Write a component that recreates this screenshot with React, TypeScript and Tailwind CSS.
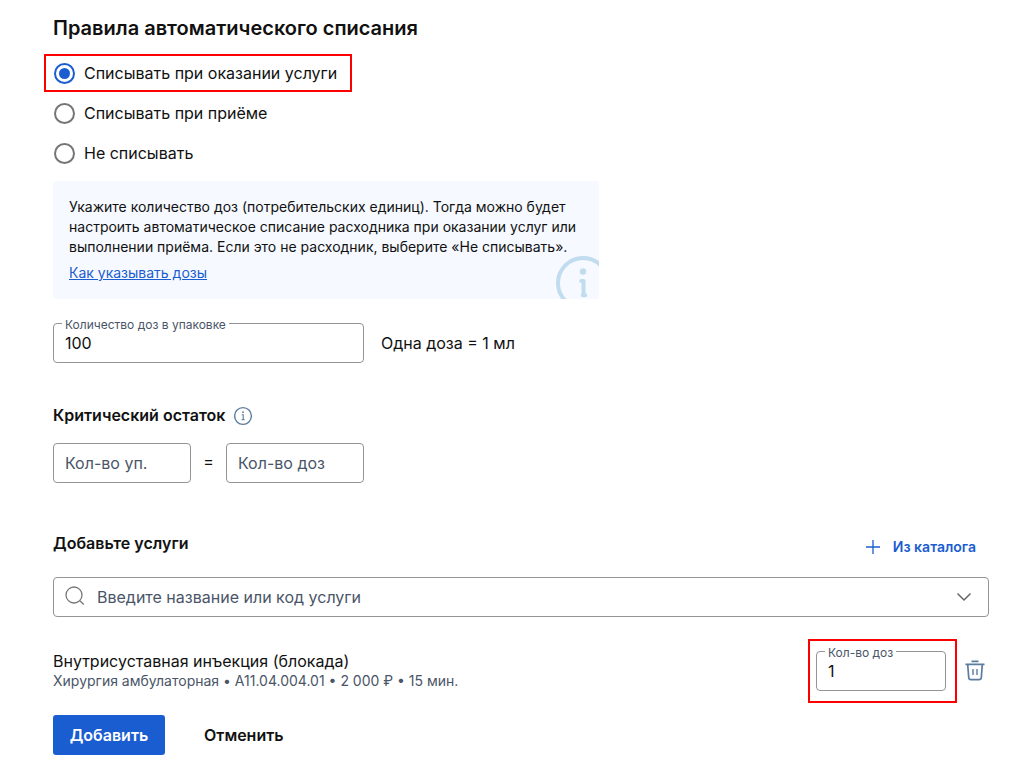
import React, { useState } from 'react';
import clsx from 'clsx';

const RULES = [
  { value: 'service', label: 'Списывать при оказании услуги', highlighted: true },
  { value: 'visit', label: 'Списывать при приёме', highlighted: false },
  { value: 'never', label: 'Не списывать', highlighted: false },
];

const INPUT =
  'h-10 w-full rounded border border-[#949494] bg-white px-[11px] text-base text-[#111111] outline-none placeholder:text-[#4a5568] placeholder:opacity-100 focus:border-[#1a5dd0]';

interface FloatingFieldProps {
  id: string;
  label: string;
  defaultValue: string;
}

// Outlined input with its label sitting in the top border
const FloatingField: React.FC<FloatingFieldProps> = ({ id, label, defaultValue }) => (
  <div className="relative w-full">
    <input id={id} type="text" inputMode="numeric" defaultValue={defaultValue} className={INPUT} />
    <label
      htmlFor={id}
      className="absolute -top-1.5 left-[9px] bg-white px-[3px] text-xs leading-4 text-[#4a5568]"
    >
      {label}
    </label>
  </div>
);

const InfoIcon = () => (
  <svg viewBox="0 0 20 20" className="h-5 w-5" fill="none" stroke="#5b7c9d" strokeWidth="1.4" aria-hidden="true">
    <circle cx="10" cy="10" r="8.4" />
    <path d="M8.7 8.7h1.5v5.1M8.5 13.8h3.2" strokeWidth="1.1" />
    <circle cx="10" cy="6.2" r="0.9" fill="#5b7c9d" stroke="none" />
  </svg>
);

const InfoWatermark = () => (
  <svg
    viewBox="0 0 54 54"
    className="absolute -right-[11px] -bottom-[11px] h-[54px] w-[54px]"
    fill="none"
    stroke="#c0dcee"
    strokeLinecap="round"
    strokeLinejoin="round"
    aria-hidden="true"
  >
    <circle cx="27" cy="27" r="25" strokeWidth="4" />
    <circle cx="27" cy="15.5" r="3.2" fill="#c0dcee" stroke="none" />
    <path d="M25.2 25h2.3v14M26.8 39.2h2.4" strokeWidth="4" />
  </svg>
);

const SearchIcon = () => (
  <svg viewBox="0 0 20 20" className="h-5 w-5" fill="none" stroke="#777777" strokeWidth="1.3" aria-hidden="true">
    <circle cx="9" cy="9" r="8" />
    <path d="M14.8 14.8l4 3.6" />
  </svg>
);

const ChevronIcon = () => (
  <svg viewBox="0 0 16 10" className="h-2.5 w-4" fill="none" stroke="#666666" strokeWidth="1.5" aria-hidden="true">
    <path d="M1.5 1.5L8 8l6.5-6.5" />
  </svg>
);

const PlusIcon = () => (
  <svg viewBox="0 0 16 16" className="h-4 w-4" fill="none" stroke="#1a5dd0" strokeWidth="1.3" aria-hidden="true">
    <path d="M8 1v14M1 8h14" />
  </svg>
);

const TrashIcon = () => (
  <svg viewBox="0 0 20 22" className="h-[22px] w-5" fill="none" stroke="#5b7c9d" strokeWidth="1.7" aria-hidden="true">
    <path d="M6.5 1.3h7M0.5 4.3h19" />
    <path d="M2.7 4.5l1 13c.1 1.5.9 2.1 2.2 2.1h8.2c1.3 0 2.1-.6 2.2-2.1l1-13" />
    <path d="M8 9v6M12 9v6" strokeWidth="1.4" />
  </svg>
);

const App: React.FC = () => {
  const [rule, setRule] = useState('service');

  return (
    <form
      className="bg-white pt-4 pr-[43px] pb-[19px] pl-[53px] font-['Inter',sans-serif] text-base text-[#111111]"
      onSubmit={(e) => e.preventDefault()}
    >
      {/* Write-off rules */}
      <h2 id="rules-title" className="text-xl leading-6 font-semibold">
        Правила автоматического списания
      </h2>
      <div role="radiogroup" aria-labelledby="rules-title" className="mt-3.5 -ml-[9px] flex flex-col items-start gap-0.5">
        {RULES.map((r) => (
          <label
            key={r.value}
            className={clsx(
              'flex h-[38px] items-center gap-[9px] border-2 pr-[13px] pl-2',
              r.highlighted ? 'border-[#ff0000]' : 'border-transparent',
            )}
          >
            <input
              type="radio"
              name="rule"
              value={r.value}
              checked={rule === r.value}
              onChange={() => setRule(r.value)}
              className="grid h-[21px] w-[21px] appearance-none place-items-center rounded-full border-2 border-[#757575] before:hidden before:h-[11px] before:w-[11px] before:rounded-full before:bg-[#1a5dd0] checked:border-[#1a5dd0] checked:before:block"
            />
            <span>{r.label}</span>
          </label>
        ))}
      </div>

      {/* Hint */}
      <div className="relative mt-[9px] max-w-[546px] overflow-hidden rounded bg-[#f6f9ff] p-4 text-sm leading-5">
        <p>
          Укажите количество доз (потребительских единиц). Тогда можно будет настроить
          автоматическое списание расходника при оказании услуг или выполнении приёма. Если это
          не расходник, выберите «Не списывать».
        </p>
        <a href="#doses" className="mt-1.5 block w-fit text-[#1a5dd0] underline">
          Как указывать дозы
        </a>
        <InfoWatermark />
      </div>

      {/* Doses per package */}
      <div className="mt-6 flex items-center gap-[17px]">
        <div className="w-[311px]">
          <FloatingField id="pack-doses" label="Количество доз в упаковке" defaultValue="100" />
        </div>
        <span>Одна доза = 1 мл</span>
      </div>

      {/* Critical balance */}
      <div className="mt-10 flex h-6 items-center gap-2">
        <h3 className="font-semibold">Критический остаток</h3>
        <button type="button" aria-label="Подробнее" className="pt-0.5">
          <InfoIcon />
        </button>
      </div>
      <div className="mt-4 flex w-[311px] items-center">
        <input type="text" aria-label="Кол-во уп." placeholder="Кол-во уп." className={INPUT} />
        <span className="w-[35px] shrink-0 pb-1 text-center">=</span>
        <input type="text" aria-label="Кол-во доз" placeholder="Кол-во доз" className={INPUT} />
      </div>

      {/* Services */}
      <div className="mt-11 flex h-10 items-center justify-between">
        <h3 className="pb-2 font-semibold">Добавьте услуги</h3>
        <button type="button" className="flex h-10 items-center gap-3 px-[13px] text-sm font-semibold text-[#1a5dd0]">
          <PlusIcon />
          Из каталога
        </button>
      </div>
      <div className="mt-2.5 flex h-10 items-center gap-3 rounded border border-[#949494] pr-4 pl-[11px]">
        <span className="pb-0.5">
          <SearchIcon />
        </span>
        <input
          type="text"
          role="combobox"
          aria-expanded="false"
          aria-label="Введите название или код услуги"
          placeholder="Введите название или код услуги"
          className="min-w-0 flex-1 bg-transparent outline-none placeholder:text-[#4a5568] placeholder:opacity-100"
        />
        <button type="button" aria-label="Показать список">
          <ChevronIcon />
        </button>
      </div>

      <div className="mt-[22px] flex items-center pr-1">
        <div className="min-w-0 flex-1 leading-5">
          <p>Внутрисуставная инъекция (блокада)</p>
          <p className="text-sm leading-5 text-[#4a5568]">
            Хирургия амбулаторная • A11.04.004.01 • 2 000 ₽ • 15 мин.
          </p>
        </div>
        <div className="mr-2 w-[149px] border-2 border-[#ff0000] py-2.5 pr-[9px] pl-1.5">
          <FloatingField id="service-doses" label="Кол-во доз" defaultValue="1" />
        </div>
        <button type="button" aria-label="Удалить услугу">
          <TrashIcon />
        </button>
      </div>

      {/* Actions */}
      <div className="mt-3 flex gap-[23px] font-semibold">
        <button type="submit" className="h-10 w-28 rounded-[3px] bg-[#1a5dd0] text-white">
          Добавить
        </button>
        <button type="button" className="h-10 px-4">
          Отменить
        </button>
      </div>
    </form>
  );
};

export default App;
